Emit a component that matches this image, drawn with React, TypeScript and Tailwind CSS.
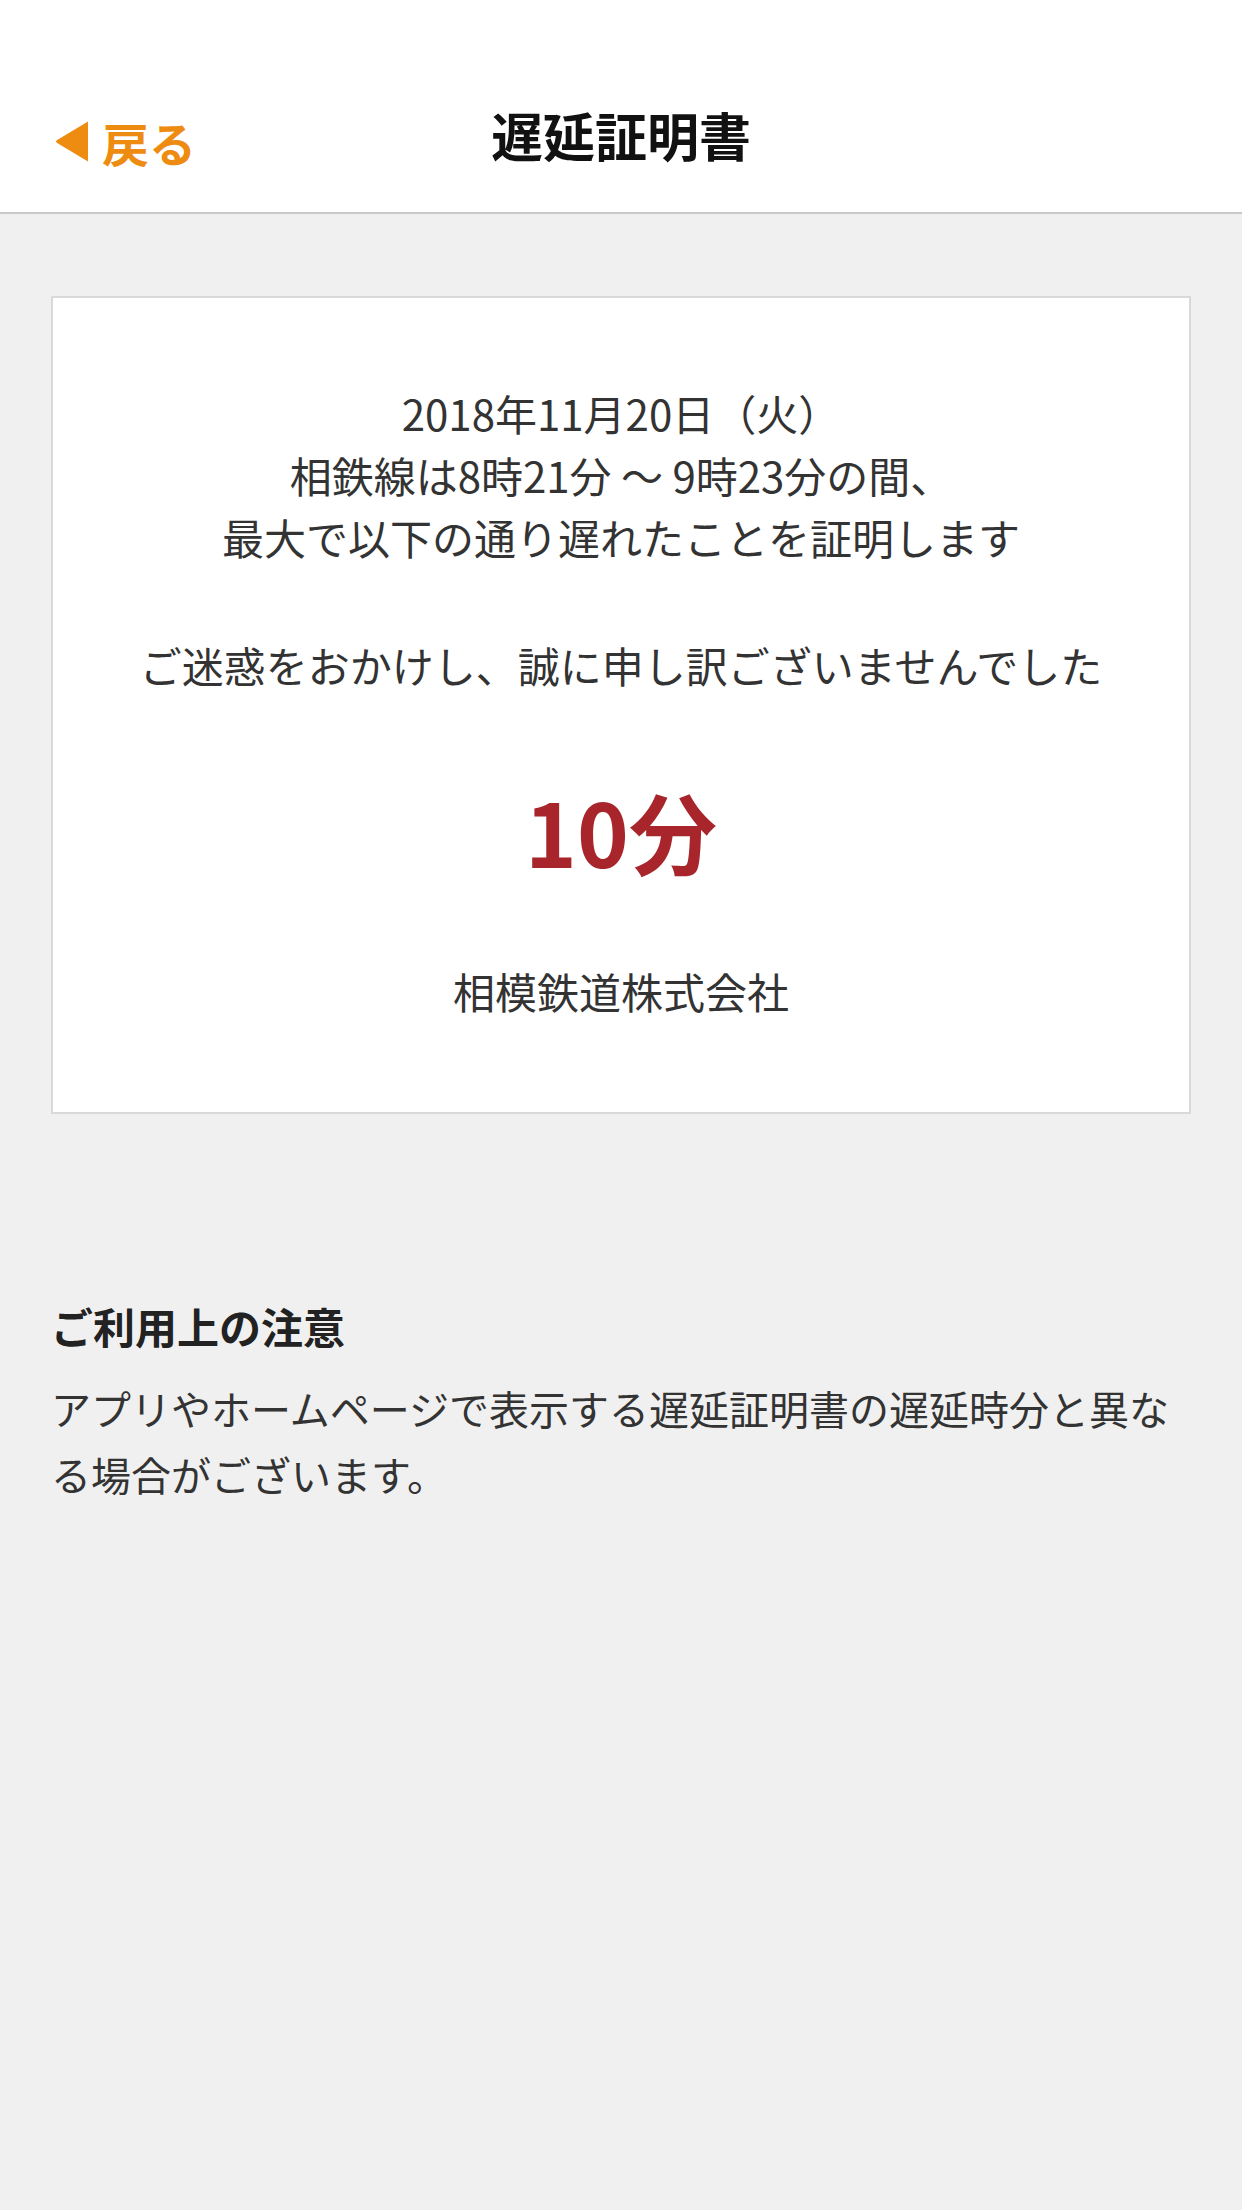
export default function App() {
    return (
        <div
            className="min-h-[2210px] w-[1242px] bg-[#f0f0f0] text-[#333333]"
            style={{ fontFamily: '"Noto Sans CJK JP", "Noto Sans", sans-serif' }}
        >
            {/* Header */}
            <header className="relative flex h-[214px] items-center justify-center border-b-2 border-[#c9c9c9] bg-white pt-[58px]">
                <button className="absolute left-[54px] top-[141px] flex -translate-y-1/2 items-center gap-[12px] text-[#ee8c12]">
                    <svg width="36" height="44" viewBox="0 0 36 44">
                        <path d="M34 2 L34 42 L4 24 Q0 22 4 20 Z" fill="#ee8c12" />
                    </svg>
                    <span className="text-[47px] font-bold leading-none">戻る</span>
                </button>
                <h1 className="text-[52px] font-bold leading-none text-[#111111]">遅延証明書</h1>
            </header>

            <main className="px-[51px] pt-[82px]">
                {/* Certificate Card */}
                <div className="border-2 border-[#d9d9d9] bg-white px-6 pb-[90px] pt-[84px] text-center">
                    <p className="text-[42px] leading-[62px]">
                        2018年11月20日（火）
                        <br />
                        相鉄線は8時21分 〜 9時23分の間、
                        <br />
                        最大で以下の通り遅れたことを証明します
                    </p>
                    <p className="mt-[66px] text-[42px] leading-[62px]">
                        ご迷惑をおかけし、誠に申し訳ございませんでした
                    </p>
                    <p className="mt-[84px] text-[88px] font-bold leading-[100px] text-[#a8262b]">10分</p>
                    <p className="mt-[80px] text-[42px] leading-[62px]">相模鉄道株式会社</p>
                </div>

                {/* Notice */}
                <section className="mt-[182px]">
                    <h2 className="text-[42px] font-bold leading-[60px] text-[#222222]">ご利用上の注意</h2>
                    <p className="mt-[19px] text-[40px] leading-[66px] text-[#333333]">
                        アプリやホームページで表示する遅延証明書の遅延時分と異なる場合がございます。
                    </p>
                </section>
            </main>
        </div>
    );
}
